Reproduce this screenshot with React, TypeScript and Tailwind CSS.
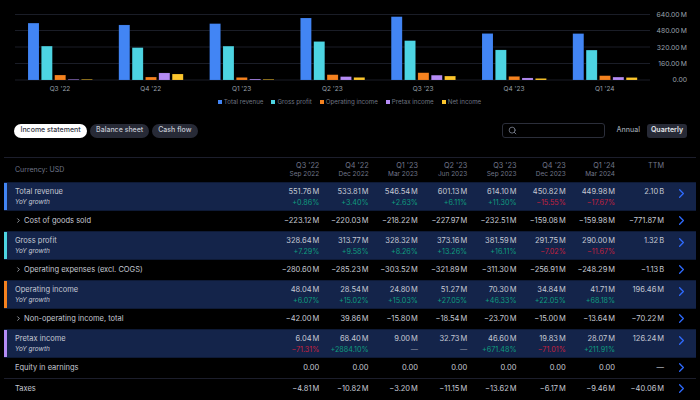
import { ChevronRight, Search } from 'lucide-react';

const font = { fontFamily: 'Inter, sans-serif' };

const quarters = ["Q3 '22", "Q4 '22", "Q1 '23", "Q2 '23", "Q3 '23", "Q4 '23", "Q1 '24"];
const months = ['Sep 2022', 'Dec 2022', 'Mar 2023', 'Jun 2023', 'Sep 2023', 'Dec 2023', 'Mar 2024'];

const barColors = ['#4285f4', '#4dd4e2', '#f5821f', '#b58cf5', '#fcc62d'];

// values in millions, drawn against a 640M axis
const chartData = [
  [551.76, 328.64, 48.04, 6.04, 6],
  [533.81, 313.77, 28.54, 68.4, 58],
  [546.54, 328.32, 24.8, 9, 6],
  [601.13, 373.16, 51.27, 32.73, 25],
  [614.1, 381.59, 70.3, 46.6, 38],
  [450.82, 291.75, 34.84, 19.83, 15],
  [449.98, 290, 41.71, 28.07, 24],
];

const legend = [
  ['Total revenue', 'bg-[#4285f4]'],
  ['Gross profit', 'bg-[#4dd4e2]'],
  ['Operating income', 'bg-[#f5821f]'],
  ['Pretax income', 'bg-[#b58cf5]'],
  ['Net income', 'bg-[#fcc62d]'],
];

function Chart() {
  const base = 80;
  const scale = 66 / 640;
  return (
    <svg width="700" height="95" className="block">
      {[14.5, 30.5, 47, 63.5, 80].map((y) => (
        <line key={y} x1="15" x2="650" y1={y} y2={y} stroke="#1a1d27" strokeWidth="1" />
      ))}
      {chartData.map((group, i) =>
        group.map((v, j) => {
          const h = v * scale;
          return (
            <rect
              key={j}
              x={28 + i * 90.8 + j * 13.35}
              y={base - h}
              width="11"
              height={h}
              fill={barColors[j]}
              stroke="#000"
              strokeOpacity="0.2"
              strokeWidth="0.5"
            />
          );
        })
      )}
      {quarters.map((q, i) => (
        <text key={q} x={60 + i * 90.8} y="91" textAnchor="middle" fontSize="6.5" fill="#9aa0ab">
          {q}
        </text>
      ))}
      {['640.00 M', '480.00 M', '320.00 M', '160.00 M', '0.00'].map((t, i) => (
        <text key={t} x="687" y={[16.8, 32.8, 49.5, 65.8, 82.3][i]} textAnchor="end" fontSize="6.8" fill="#9aa0ab">
          {t.replace(' ', '\u2009')}
        </text>
      ))}
    </svg>
  );
}

type Row = {
  label: string;
  values: string[];
  growth?: string[];
  accent?: string;
  expand?: boolean;
  line?: boolean;
};

const rows: Row[] = [
  {
    label: 'Total revenue',
    accent: 'bg-[#4285f4]',
    values: ['551.76 M', '533.81 M', '546.54 M', '601.13 M', '614.10 M', '450.82 M', '449.98 M', '2.10 B'],
    growth: ['+0.86%', '+3.40%', '+2.63%', '+6.11%', '+11.30%', '−15.55%', '−17.67%', ''],
  },
  {
    label: 'Cost of goods sold',
    expand: true,
    values: ['−223.12 M', '−220.03 M', '−218.22 M', '−227.97 M', '−232.51 M', '−159.08 M', '−159.98 M', '−771.87 M'],
  },
  {
    label: 'Gross profit',
    accent: 'bg-[#4dd4e2]',
    values: ['328.64 M', '313.77 M', '328.32 M', '373.16 M', '381.59 M', '291.75 M', '290.00 M', '1.32 B'],
    growth: ['+7.29%', '+9.58%', '+8.26%', '+13.26%', '+16.11%', '−7.02%', '−11.67%', ''],
  },
  {
    label: 'Operating expenses (excl. COGS)',
    expand: true,
    values: ['−280.60 M', '−285.23 M', '−303.52 M', '−321.89 M', '−311.30 M', '−256.91 M', '−248.29 M', '−1.13 B'],
  },
  {
    label: 'Operating income',
    accent: 'bg-[#f5821f]',
    values: ['48.04 M', '28.54 M', '24.80 M', '51.27 M', '70.30 M', '34.84 M', '41.71 M', '196.46 M'],
    growth: ['+6.07%', '+15.02%', '+15.03%', '+27.05%', '+46.33%', '+22.05%', '+68.18%', ''],
  },
  {
    label: 'Non-operating income, total',
    expand: true,
    values: ['−42.00 M', '39.86 M', '−15.80 M', '−18.54 M', '−23.70 M', '−15.00 M', '−13.64 M', '−70.22 M'],
  },
  {
    label: 'Pretax income',
    accent: 'bg-[#b58cf5]',
    values: ['6.04 M', '68.40 M', '9.00 M', '32.73 M', '46.60 M', '19.83 M', '28.07 M', '126.24 M'],
    growth: ['−71.31%', '+2884.10%', '—', '—', '+671.48%', '−71.01%', '+211.91%', ''],
  },
  {
    label: 'Equity in earnings',
    line: true,
    values: ['0.00', '0.00', '0.00', '0.00', '0.00', '0.00', '0.00', '—'],
  },
  {
    label: 'Taxes',
    values: ['−4.81 M', '−10.82 M', '−3.20 M', '−11.15 M', '−13.62 M', '−6.17 M', '−9.46 M', '−40.06 M'],
  },
];

function growthColor(g: string) {
  if (g.startsWith('+')) return 'text-[#0f9d7f]';
  if (g.startsWith('−')) return 'text-[#c4213f]';
  return 'text-[#8a90a0]';
}

function Amount({ value }: { value: string }) {
  const [num, unit] = value.split(' ');
  return (
    <>
      {num}
      {unit && <span className="ml-[1px]">{unit}</span>}
    </>
  );
}

function TableRow({ row }: { row: Row }) {
  const highlighted = !!row.accent;
  return (
    <div
      className={`flex items-center ${highlighted ? 'h-[29px] bg-[#14244a] border-y border-[#0e1a36]' : 'h-[20px]'} ${
        row.line ? 'border-b border-[#1c1e2c] h-[21px]' : ''
      }`}
    >
      <div className={`w-[2.5px] self-stretch shrink-0 ${row.accent ?? ''}`} />
      <div className={`w-[263.5px] shrink-0 pl-[8.5px] text-[#c5c9d3] ${highlighted ? 'pt-[2px]' : ''}`}>
        <div className="flex items-center gap-[1px] leading-[10px]">
          {row.expand && <ChevronRight size={7} strokeWidth={2.5} className="text-[#c5c9d3]" />}
          <span className={`text-[7.5px] ${row.expand ? 'ml-[1px]' : ''}`}>{row.label}</span>
        </div>
        {row.growth && <div className="text-[6.5px] italic leading-[9px] mt-[0.5px]">YoY growth</div>}
      </div>
      {row.values.map((v, i) => (
        <div key={i} className={`${i === 7 ? 'w-[49px]' : 'w-[49.3px]'} shrink-0 text-right ${highlighted ? 'pt-[2px]' : ''}`}>
          <div className="text-[7.5px] leading-[10px] text-[#c5c9d3]">
            <Amount value={v} />
          </div>
          {row.growth && (
            <div className={`text-[7.2px] leading-[9px] mt-[0.5px] ${growthColor(row.growth[i])}`}>
              {row.growth[i] || '\u00a0'}
            </div>
          )}
        </div>
      ))}
      <div className={`flex-1 flex justify-center pl-[2px] ${highlighted ? 'self-start pt-[3px]' : ''}`}>
        <ChevronRight size={15} strokeWidth={2} className="text-[#2f6bff]" />
      </div>
    </div>
  );
}

export default function App() {
  return (
    <div style={font} className="w-[700px] h-[400px] overflow-hidden bg-black">
      <Chart />
      <div className="flex justify-center gap-[8px] h-[13px] items-center mt-[0.5px] pr-[1px]">
        {legend.map(([label, color]) => (
          <div key={label} className="flex items-center gap-[2px]">
            <span className={`w-[4px] h-[4px] ${color}`} />
            <span className="text-[6.2px] text-[#6f7582]">{label}</span>
          </div>
        ))}
      </div>

      <div className="flex items-center h-[14px] mt-[15px] pl-[14px] pr-[13px]">
        <div className="h-[14px] px-[6.5px] rounded-full bg-white text-[#33363f] text-[7px] font-medium flex items-center">Income statement</div>
        <div className="h-[14px] ml-[3px] px-[6px] rounded-full bg-[#272a36] text-[#c5c9d3] text-[7px] font-medium flex items-center">Balance sheet</div>
        <div className="h-[14px] ml-[3px] px-[6px] rounded-full bg-[#272a36] text-[#c5c9d3] text-[7px] font-medium flex items-center">Cash flow</div>
        <div className="ml-auto w-[103px] h-[15px] rounded-[3px] border border-[#2b2e3a] flex items-center pl-[5px]">
          <Search size={9} className="text-[#8a90a0]" />
        </div>
        <div className="ml-[12px] text-[7px] text-[#9aa0ab] font-medium">Annual</div>
        <div className="ml-[7px] h-[14px] px-[4px] rounded-[3px] bg-[#272a36] text-[#e5e7eb] text-[7px] font-semibold flex items-center">Quarterly</div>
      </div>

      <div className="mt-[19px] ml-[4px] w-[692px] border-t border-[#1c1e2c]">
        <div className="flex h-[24px] items-start pt-[3.5px]">
          <div className="w-[266px] shrink-0 pl-[11px] pt-[4px] text-[7px] text-[#70768a]">Currency: USD</div>
          {quarters.map((q, i) => (
            <div key={q} className="w-[49.3px] shrink-0 text-right">
              <div className="text-[7.3px] leading-[9px] text-[#70768a]">{q}</div>
              <div className="text-[6.5px] leading-[9px] text-[#70768a]">{months[i]}</div>
            </div>
          ))}
          <div className="w-[49px] shrink-0 text-right text-[7.3px] leading-[9px] text-[#70768a]">TTM</div>
        </div>
        {rows.map((row) => (
          <TableRow key={row.label} row={row} />
        ))}
      </div>
    </div>
  );
}
